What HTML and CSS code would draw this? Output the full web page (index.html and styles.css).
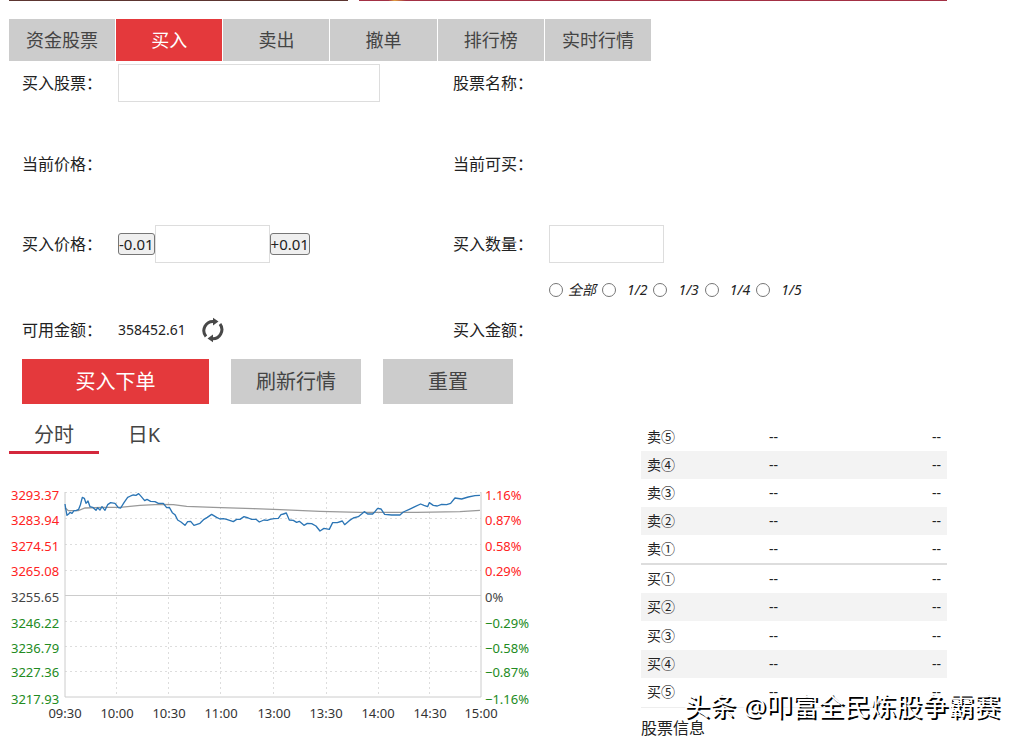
FILE: index.html
```html
<!DOCTYPE html>
<html lang="zh-CN">
<head>
<meta charset="utf-8">
<title>买入</title>
<link rel="stylesheet" href="styles.css">
</head>
<body>
<div class="page">
  <div class="banners"><div class="banner banner-brown"></div><div class="banner banner-red"></div></div>
  <nav class="tabs">
    <a href="#funds">资金股票</a>
    <a href="#buy" class="active">买入</a>
    <a href="#sell">卖出</a>
    <a href="#cancel">撤单</a>
    <a href="#rank">排行榜</a>
    <a href="#live">实时行情</a>
  </nav>
  <form class="order">
    <div class="fields">
      <label for="stock">买入股票：</label>
      <div><input class="box box-wide" id="stock" type="text"></div>
      <span>股票名称：</span><output></output>

      <span>当前价格：</span><output></output>
      <span>当前可买：</span><output></output>

      <label for="price">买入价格：</label>
      <div class="stepper">
        <button type="button" class="step">-0.01</button>
        <input class="box" id="price" type="text">
        <button type="button" class="step">+0.01</button>
      </div>
      <label for="amount">买入数量：</label>
      <div><input class="box" id="amount" type="text"></div>

      <div class="portions">
        <label class="whole"><input type="radio" name="portion">全部</label>
        <label><input type="radio" name="portion">1/2</label>
        <label><input type="radio" name="portion">1/3</label>
        <label><input type="radio" name="portion">1/4</label>
        <label><input type="radio" name="portion">1/5</label>
      </div>

      <span>可用金额：</span>
      <div class="balance">358452.61
        <button type="button" class="reload" aria-label="刷新">
          <svg width="24" height="26" viewBox="0 0 24 26" fill="none" stroke="#484848" stroke-width="3">
            <path d="M5 19.500A9.200 9.200 0 0 1 13 4.500M19 7A9.200 9.200 0 0 1 11 21.700"/>
            <path d="M12 .8L17.500 4.500L12 8.500ZM12 17.500L6.500 21.500L12 25.200Z" fill="#484848" stroke="none"/>
          </svg>
        </button>
      </div>
      <span>买入金额：</span><output></output>
    </div>
    <div class="actions">
      <button type="submit" class="action primary">买入下单</button>
      <button type="button" class="action">刷新行情</button>
      <button type="reset" class="action">重置</button>
    </div>
  </form>
  <div class="market">
    <section class="trend">
      <nav class="views"><a href="#minute" class="active">分时</a><a href="#day">日K</a></nav>
      <svg class="chart" viewBox="9 484 531 240" role="img" aria-label="分时走势">
        <path class="grid" d="M65 492.500H481M65 518.500H481M65 544.500H481M65 570.500H481M65 621.500H481M65 646.500H481M65 671.500H481M116.500 492V697M168.500 492V697M220.500 492V697M273.500 492V697M326.500 492V697M378.500 492V697M429.500 492V697"/>
        <path class="axis" d="M65 492V697H481V492M65 595.500H481"/>
        <g transform="translate(0 480) scale(.3333)">
          <polyline class="average" points="195,83 205,92 235,92 255,84 310,82 360,82 420,76 480,73 520,74 560,79 640,82 760,86 840,89 960,94 1080,97 1250,97 1380,95 1440,91"/>
          <polyline class="price" points="195,72 197,85 201,106 206,102 210,97 216,100 222,92 228,92 236,88 241,75 247,52 253,55 258,70 264,63 270,80 278,82 288,91 293,83 300,90 306,80 315,91 323,74 332,68 345,70 355,83 362,84 372,68 383,52 392,48 400,45 408,46 416,41 424,50 434,62 441,58 452,64 465,65 475,70 490,70 500,83 508,82 517,98 525,104 533,120 543,126 555,136 563,125 572,124 582,136 600,130 612,118 622,112 635,103 650,112 660,117 670,116 680,118 700,125 710,118 720,118 732,110 745,114 755,118 768,118 778,126 792,120 802,121 810,118 822,116 835,115 843,104 850,102 859,99 868,120 880,121 890,127 898,124 912,136 922,130 935,131 948,138 960,153 972,145 988,148 998,128 1012,128 1027,123 1034,134 1048,122 1060,114 1075,110 1085,102 1093,95 1103,102 1118,102 1125,95 1133,85 1143,87 1154,103 1175,105 1200,105 1210,96 1228,88 1245,80 1262,72 1272,76 1283,80 1288,68 1300,76 1312,78 1325,73 1340,74 1352,70 1365,54 1385,57 1405,51 1425,47 1440,46"/>
        </g>
        <g class="up">
          <text x="11" y="500">3293.37</text><text x="11" y="525">3283.94</text><text x="11" y="551">3274.51</text><text x="11" y="576">3265.08</text>
          <text x="485" y="500">1.16%</text><text x="485" y="525">0.87%</text><text x="485" y="551">0.58%</text><text x="485" y="576">0.29%</text>
        </g>
        <g class="flat"><text x="11" y="602">3255.65</text><text x="485" y="602">0%</text></g>
        <g class="down">
          <text x="11" y="628">3246.22</text><text x="11" y="653">3236.79</text><text x="11" y="677">3227.36</text><text x="11" y="704">3217.93</text>
          <text x="485" y="628">−0.29%</text><text x="485" y="653">−0.58%</text><text x="485" y="677">−0.87%</text><text x="485" y="704">−1.16%</text>
        </g>
        <g class="time">
          <text x="65" y="718">09:30</text><text x="117" y="718">10:00</text><text x="169" y="718">10:30</text><text x="221" y="718">11:00</text><text x="274" y="718">13:00</text><text x="326" y="718">13:30</text><text x="378" y="718">14:00</text><text x="430" y="718">14:30</text><text x="481" y="718">15:00</text>
        </g>
      </svg>
    </section>
    <section class="quotes">
      <table>
        <tbody>
          <tr><th scope="row">卖⑤</th><td>--</td><td>--</td></tr>
          <tr><th scope="row">卖④</th><td>--</td><td>--</td></tr>
          <tr><th scope="row">卖③</th><td>--</td><td>--</td></tr>
          <tr><th scope="row">卖②</th><td>--</td><td>--</td></tr>
          <tr><th scope="row">卖①</th><td>--</td><td>--</td></tr>
        </tbody>
      </table>
      <table class="bids">
        <tbody>
          <tr><th scope="row">买①</th><td>--</td><td>--</td></tr>
          <tr><th scope="row">买②</th><td>--</td><td>--</td></tr>
          <tr><th scope="row">买③</th><td>--</td><td>--</td></tr>
          <tr><th scope="row">买④</th><td>--</td><td>--</td></tr>
          <tr><th scope="row">买⑤</th><td>--</td><td>--</td></tr>
        </tbody>
      </table>
      <h2>股票信息</h2>
    </section>
  </div>
</div>
<div class="watermark">头条 @叩富全民炼股争霸赛</div>
</body>
</html>
```
FILE: styles.css
```css
* { box-sizing: border-box; }
body {
  margin: 0;
  position: relative;
  background: #fff;
  color: #222;
  font-family: "Noto Sans", "Noto Sans CJK SC", sans-serif;
  font-size: 16px;
  line-height: 24px;
}
a { color: inherit; text-decoration: none; }
button, input { font: inherit; color: inherit; margin: 0; }
.page { max-width: 956px; padding: 0 9px; }

.banners { display: flex; gap: 11px; height: 1px; }
.banner-brown { flex: 339; background: #5c3530; }
.banner-red { flex: 588; background: linear-gradient(90deg, #a33044 5%, #e0a040 6%, #a33044 8%); }

.tabs {
  display: grid;
  grid-template-columns: repeat(6, 1fr);
  gap: 1px;
  max-width: 642px;
  margin-top: 18px;
}
.tabs a {
  background: #ccc;
  color: #444;
  font-size: 18px;
  line-height: 42px;
  text-align: center;
}
.tabs .active { background: #e4393c; color: #fff; }

.order { padding-left: 13px; }
.fields {
  display: grid;
  grid-template-columns: 96px 335px 96px 1fr;
  grid-template-rows: 44px 118px 42px 50px 30px;
  align-items: center;
}
.box {
  display: block;
  width: 115px;
  height: 38px;
  padding: 0 8px;
  border: 1px solid #ddd;
  background: #fff;
}
.box-wide { width: 262px; }
.stepper { display: flex; align-items: center; }
.step {
  height: 22px;
  padding: 0;
  border: 1px solid #767676;
  border-radius: 3px;
  background: #efefef;
  font-size: 15px;
  line-height: 18px;
}
.portions {
  grid-column: 4;
  display: flex;
  gap: 6px;
  font-size: 14px;
  font-style: italic;
}
.portions label { display: flex; align-items: center; gap: 11px; }
.portions .whole { gap: 5px; }
.portions input { width: 14px; height: 14px; }
.balance { display: flex; align-items: center; gap: 15px; font-size: 14px; }
.reload { display: flex; padding: 0; border: 0; background: none; }

.actions { display: flex; gap: 22px; margin-top: 14px; }
.action {
  width: 130px;
  height: 45px;
  padding: 0;
  border: 0;
  background: #ccc;
  color: #444;
  font-size: 20px;
}
.primary { width: 187px; background: #e4393c; color: #fff; }

.market { display: flex; justify-content: space-between; }
.trend { flex: 0 1 531px; margin-top: 14px; }
.views { display: flex; }
.views a {
  width: 90px;
  height: 36px;
  border-bottom: 3px solid transparent;
  color: #444;
  font-size: 20px;
  line-height: 33px;
  text-align: center;
}
.views .active { border-color: #d4283c; }
.chart { display: block; width: 100%; margin-top: 30px; font-size: 13px; }
.grid { fill: none; stroke: #ddd; stroke-dasharray: 2 3; }
.axis { fill: none; stroke: #ccc; stroke-width: 1; }
.average { fill: none; stroke: #999; stroke-width: 4; }
.price { fill: none; stroke: #2b75b5; stroke-width: 4; stroke-linejoin: round; }
.up { fill: #f22; }
.flat { fill: #444; }
.down { fill: #228b22; }
.time { fill: #333; text-anchor: middle; }

.quotes { flex: 0 1 306px; margin-top: 19px; }
.quotes table { width: 100%; table-layout: fixed; border-collapse: collapse; font-size: 14px; }
.quotes th, .quotes td { height: 28px; padding: 0 6px; font-weight: 400; line-height: 20px; text-align: left; }
.quotes th { width: 122px; }
.quotes td:last-child { text-align: right; }
.quotes tr:nth-child(even) { background: #f3f3f3; }
.quotes .bids { border-top: 2px solid #ddd; border-bottom: 1px solid #eee; }
.bids tr:nth-child(odd) td { height: 29px; }
.quotes h2 { margin: 8px 0 0; font-size: 16px; font-weight: 400; line-height: 24px; }

.watermark {
  position: absolute;
  right: 24px;
  bottom: 16px;
  color: #fff;
  font-size: 26px;
  line-height: 36px;
  text-shadow: 2px 2px 0 #000;
  white-space: nowrap;
}
```
